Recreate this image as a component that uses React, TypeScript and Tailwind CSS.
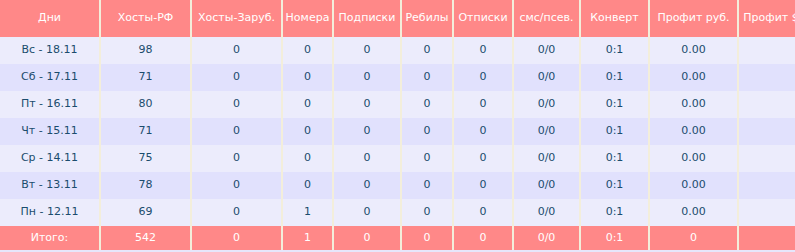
const columns = [
  { title: "Дни", w: "w-[100px]" },
  { title: "Хосты-РФ", w: "w-[91px]" },
  { title: "Хосты-Заруб.", w: "w-[91px]" },
  { title: "Номера", w: "w-[51px]" },
  { title: "Подписки", w: "w-[68px]" },
  { title: "Ребилы", w: "w-[52px]" },
  { title: "Отписки", w: "w-[60px]" },
  { title: "смс/псев.", w: "w-[67px]" },
  { title: "Конверт", w: "w-[69px]" },
  { title: "Профит руб.", w: "w-[89px]" },
  { title: "Профит $", w: "w-[66px]" },
];

type Row = { day: string; hosts: number; numbers: number };

const rows: Row[] = [
  { day: "Вс - 18.11", hosts: 98, numbers: 0 },
  { day: "Сб - 17.11", hosts: 71, numbers: 0 },
  { day: "Пт - 16.11", hosts: 80, numbers: 0 },
  { day: "Чт - 15.11", hosts: 71, numbers: 0 },
  { day: "Ср - 14.11", hosts: 75, numbers: 0 },
  { day: "Вт - 13.11", hosts: 78, numbers: 0 },
  { day: "Пн - 12.11", hosts: 69, numbers: 1 },
];

const cell = "border-r-2 border-[#f3eedb] text-center p-0";

export default function App() {
  return (
    <div className="w-[795px] h-[252px] overflow-hidden bg-[#e6e6fb] font-['DejaVu_Sans',sans-serif] text-[11px]">
      <table className="table-fixed border-collapse w-[804px]">
        <thead>
          <tr className="h-[37px] bg-[#ff8888] text-white">
            {columns.map((c) => (
              <th key={c.title} className={`${cell} ${c.w} font-normal whitespace-nowrap`}>
                {c.title}
              </th>
            ))}
          </tr>
        </thead>
        <tbody className="text-[#1b4c6d]">
          {rows.map((r, i) => (
            <tr key={r.day} className={`h-[27px] ${i % 2 === 0 ? "bg-[#ececfc]" : "bg-[#e1e1fd]"}`}>
              <td className={cell}>{r.day}</td>
              <td className={cell}>{r.hosts}</td>
              <td className={cell}>0</td>
              <td className={cell}>{r.numbers}</td>
              <td className={cell}>0</td>
              <td className={cell}>0</td>
              <td className={cell}>0</td>
              <td className={cell}>0/0</td>
              <td className={cell}>0:1</td>
              <td className={cell}>0.00</td>
              <td className={cell}></td>
            </tr>
          ))}
          {/* Totals */}
          <tr className="h-[24px] bg-[#ff8888] text-white">
            <td className={cell}>Итого:</td>
            <td className={cell}>542</td>
            <td className={cell}>0</td>
            <td className={cell}>1</td>
            <td className={cell}>0</td>
            <td className={cell}>0</td>
            <td className={cell}>0</td>
            <td className={cell}>0/0</td>
            <td className={cell}>0:1</td>
            <td className={cell}>0</td>
            <td className={cell}></td>
          </tr>
        </tbody>
      </table>
    </div>
  );
}
